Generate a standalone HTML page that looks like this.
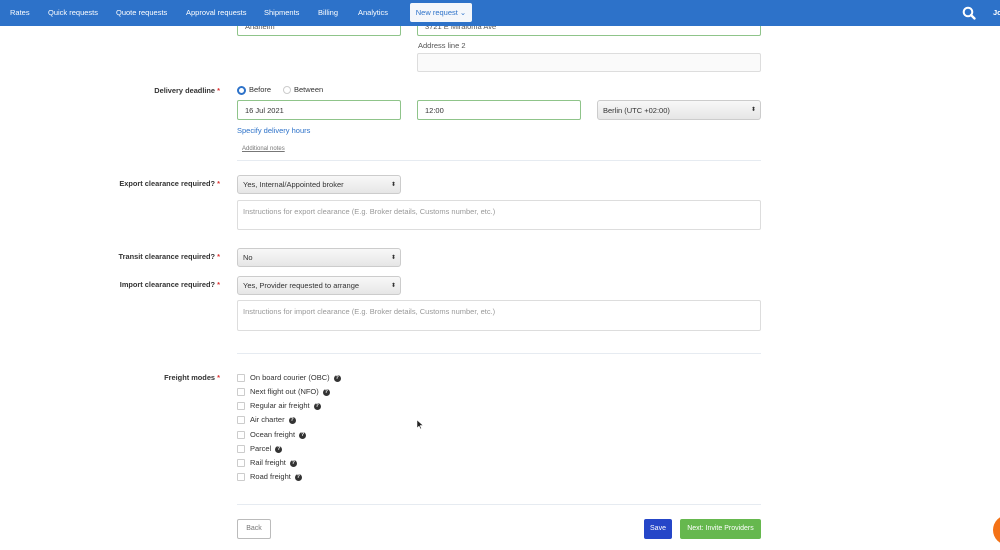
<!DOCTYPE html><html><head><style>
body{margin:0;width:1000px;height:550px;background:#fff;font-family:"Liberation Sans",sans-serif;position:relative;overflow:hidden;color:#333}
.a{position:absolute;white-space:nowrap}
.nav{position:absolute;left:0;top:0;width:1000px;height:26px;background:#2d72c9}
.nav span{position:absolute;top:8px;color:#fff;font-size:7.5px}
.in{position:absolute;border:1px solid #ddd;background:#fafafa;box-sizing:border-box;border-radius:2px}
.g{border-color:#8fc48a;background:#fff}
.sel{position:absolute;box-sizing:border-box;border:1px solid #ccc;border-radius:3px;background:linear-gradient(#f8f8f8,#e6e6e6);font-size:7.5px;padding:4px 0 0 5px;color:#333}
.sel:after{content:"⬍";position:absolute;right:4px;top:5px;font-size:6px}
.lab{position:absolute;font-size:7.4px;font-weight:bold;color:#333;text-align:right;right:780px}
.lab b{color:#d33}
.t{font-size:7.5px}
.ph{color:#999;font-size:7.5px;padding:6px 5px}
.cb{position:absolute;left:237px;width:6px;height:6px;border:1px solid #ccc;border-radius:1px}
.q{display:inline-block;width:7px;height:7px;border-radius:50%;background:#333;color:#fff;font-size:5.5px;text-align:center;line-height:7px;font-weight:bold;margin-left:4px;vertical-align:middle}
.hr{position:absolute;left:237px;width:524px;height:1px;background:#e6ebf1}
</style></head><body>
<div class="in g" style="left:237px;top:16px;width:164px;height:20px"><div class="t" style="padding:5px 7px;color:#555">Anaheim</div></div>
<div class="in g" style="left:417px;top:16px;width:344px;height:20px"><div class="t" style="padding:5px 7px;color:#555">3721 E Miraloma Ave</div></div>
<div class="nav">
<span style="left:10px">Rates</span><span style="left:48px">Quick requests</span><span style="left:116px">Quote requests</span><span style="left:186px">Approval requests</span><span style="left:264px">Shipments</span><span style="left:318px">Billing</span><span style="left:358px">Analytics</span>
<div style="position:absolute;left:410px;top:3px;width:62px;height:19px;background:#f4f7fb;border-radius:2px;color:#2d72c9;font-size:7.5px;line-height:19px;text-align:center">New request ⌄</div>
<svg style="position:absolute;left:962px;top:6px" width="14" height="14" viewBox="0 0 14 14"><circle cx="6" cy="6" r="4.3" fill="none" stroke="#fff" stroke-width="2"/><path d="M9 9l3.5 3.5" stroke="#fff" stroke-width="2.3" stroke-linecap="round"/></svg>
<span style="left:993px;font-weight:bold">Jo</span>
</div>
<div class="a t" style="left:418px;top:41px;color:#555">Address line 2</div>
<div class="in" style="left:417px;top:53px;width:344px;height:19px"></div>
<div class="lab" style="top:86px">Delivery deadline <b>*</b></div>
<div class="a" style="left:237px;top:86px;width:5px;height:5px;border-radius:50%;border:2px solid #2d72c9;background:#fff"></div>
<div class="a t" style="left:249px;top:85px">Before</div>
<div class="a" style="left:283px;top:86px;width:6px;height:6px;border-radius:50%;border:1px solid #ccc"></div>
<div class="a t" style="left:294px;top:85px">Between</div>
<div class="in g" style="left:237px;top:100px;width:164px;height:20px"><div class="t" style="padding:5px 7px">16 Jul 2021</div></div>
<div class="in g" style="left:417px;top:100px;width:164px;height:20px"><div class="t" style="padding:5px 7px">12:00</div></div>
<div class="sel" style="left:597px;top:100px;width:164px;height:20px;padding-top:5px">Berlin (UTC +02:00)</div>
<div class="a t" style="left:237px;top:126px;color:#2d72c9">Specify delivery hours</div>
<div class="a" style="left:242px;top:146px;font-size:6px;color:#777;text-decoration:underline">Additional notes</div>
<div class="hr" style="top:160px"></div>
<div class="lab" style="top:179px">Export clearance required? <b>*</b></div>
<div class="sel" style="left:237px;top:175px;width:164px;height:19px">Yes, Internal/Appointed broker</div>
<div class="in" style="left:237px;top:200px;width:524px;height:30px;background:#fff"><div class="ph">Instructions for export clearance (E.g. Broker details, Customs number, etc.)</div></div>
<div class="lab" style="top:252px">Transit clearance required? <b>*</b></div>
<div class="sel" style="left:237px;top:248px;width:164px;height:19px">No</div>
<div class="lab" style="top:280px">Import clearance required? <b>*</b></div>
<div class="sel" style="left:237px;top:276px;width:164px;height:19px">Yes, Provider requested to arrange</div>
<div class="in" style="left:237px;top:300px;width:524px;height:31px;background:#fff"><div class="ph">Instructions for import clearance (E.g. Broker details, Customs number, etc.)</div></div>
<div class="hr" style="top:353px"></div>
<div class="lab" style="top:373px">Freight modes <b>*</b></div>
<div class="cb" style="top:374px"></div><div class="a t" style="left:250px;top:373px">On board courier (OBC)<span class="q">?</span></div>
<div class="cb" style="top:388px"></div><div class="a t" style="left:250px;top:387px">Next flight out (NFO)<span class="q">?</span></div>
<div class="cb" style="top:402px"></div><div class="a t" style="left:250px;top:401px">Regular air freight<span class="q">?</span></div>
<div class="cb" style="top:416px"></div><div class="a t" style="left:250px;top:415px">Air charter<span class="q">?</span></div>
<div class="cb" style="top:431px"></div><div class="a t" style="left:250px;top:430px">Ocean freight<span class="q">?</span></div>
<div class="cb" style="top:445px"></div><div class="a t" style="left:250px;top:444px">Parcel<span class="q">?</span></div>
<div class="cb" style="top:459px"></div><div class="a t" style="left:250px;top:458px">Rail freight<span class="q">?</span></div>
<div class="cb" style="top:473px"></div><div class="a t" style="left:250px;top:472px">Road freight<span class="q">?</span></div>
<div class="hr" style="top:504px"></div>
<div class="a" style="left:237px;top:519px;width:32px;height:18px;border:1px solid #bbb;border-radius:2px;font-size:7px;color:#777;text-align:center;line-height:18px">Back</div>
<div class="a" style="left:644px;top:519px;width:28px;height:20px;background:#2546c8;border-radius:2px;font-size:7px;color:#fff;text-align:center;line-height:20px">Save</div>
<div class="a" style="left:680px;top:519px;width:81px;height:20px;background:#66b84e;border-radius:2px;font-size:7px;color:#fff;text-align:center;line-height:20px">Next: Invite Providers</div>
<div class="a" style="left:993px;top:515px;width:30px;height:30px;border-radius:50%;background:#f47216"></div>
<svg class="a" style="left:417px;top:420px" width="7" height="10" viewBox="0 0 7 10"><path d="M0 0v8l2-2 1.5 3 1-.5L3 5.5h3z" fill="#222" stroke="#fff" stroke-width=".5"/></svg>
</body></html>
